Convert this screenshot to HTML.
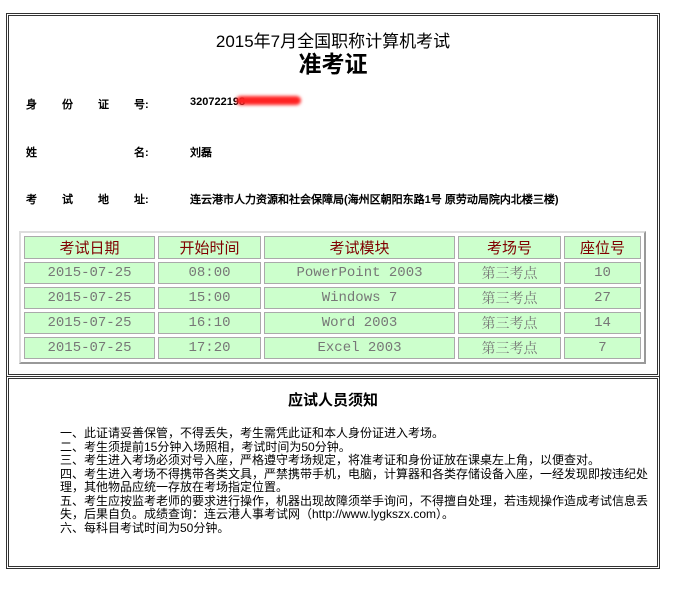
<html><head><style>
body{margin:0;background:#fff;font-family:"Liberation Serif","Noto Serif CJK SC",serif;}
.box{position:absolute;left:6px;width:648px;border:3px double #333;background:#fff}
.lab{position:absolute;font-size:11px;font-weight:bold;font-family:"Liberation Sans","WenQuanYi Zen Hei",sans-serif}
table{position:absolute;left:10px;top:215px;width:627px;border-collapse:separate;border-spacing:3px;border:2px solid #ddd;border-right-color:#999;border-bottom-color:#999}
td{background:#ccffcc;border:1px solid #aaa;text-align:center;height:22px;padding:0;font-size:14px;color:#777;font-family:"Liberation Mono","Noto Serif CJK SC",serif}
tr.h td{color:#800000;font-family:"Liberation Sans","Noto Sans CJK SC",sans-serif;font-size:15px}
.n{position:absolute;left:51px;top:48px;font-size:12px;line-height:13.5px;width:590px;font-family:"Liberation Sans","WenQuanYi Zen Hei",sans-serif}
</style></head><body>
<div class="box" style="top:13px;height:358px">
<div style="position:absolute;left:0;right:0;top:11px;text-align:center;font-size:17px;font-family:'Liberation Sans','Noto Sans CJK SC',sans-serif">2015年7月全国职称计算机考试</div>
<div style="position:absolute;left:0;right:0;top:29px;text-align:center;font-size:23px;font-weight:bold;font-family:'Liberation Sans','Noto Sans CJK SC',sans-serif">准考证</div>
<div class="lab" style="left:17px;top:80px">身</div><div class="lab" style="left:53px;top:80px">份</div><div class="lab" style="left:89px;top:80px">证</div><div class="lab" style="left:125px;top:80px">号:</div>
<div class="lab" style="left:181px;top:80px">320722198</div>
<div style="position:absolute;left:227px;top:80px;width:65px;height:9px;border-radius:5px;background:#f22;filter:blur(1.5px)"></div>
<div class="lab" style="left:17px;top:128px">姓</div><div class="lab" style="left:125px;top:128px">名:</div><div class="lab" style="left:181px;top:128px">刘磊</div>
<div class="lab" style="left:17px;top:175px">考</div><div class="lab" style="left:53px;top:175px">试</div><div class="lab" style="left:89px;top:175px">地</div><div class="lab" style="left:125px;top:175px">址:</div>
<div class="lab" style="left:181px;top:175px">连云港市人力资源和社会保障局(海州区朝阳东路1号 原劳动局院内北楼三楼)</div>
<table>
<tr class="h"><td style="width:129px">考试日期</td><td style="width:101px">开始时间</td><td style="width:189px">考试模块</td><td style="width:101px">考场号</td><td>座位号</td></tr>
<tr><td>2015-07-25</td><td>08:00</td><td>PowerPoint 2003</td><td>第三考点</td><td>10</td></tr>
<tr><td>2015-07-25</td><td>15:00</td><td>Windows 7</td><td>第三考点</td><td>27</td></tr>
<tr><td>2015-07-25</td><td>16:10</td><td>Word 2003</td><td>第三考点</td><td>14</td></tr>
<tr><td>2015-07-25</td><td>17:20</td><td>Excel 2003</td><td>第三考点</td><td>7</td></tr>
</table>
</div>
<div class="box" style="top:376px;height:187px">
<div style="position:absolute;left:0;right:0;top:10px;text-align:center;font-size:15px;font-weight:bold;font-family:'Liberation Sans','Noto Sans CJK SC',sans-serif">应试人员须知</div>
<div class="n">一、此证请妥善保管，不得丢失，考生需凭此证和本人身份证进入考场。<br>二、考生须提前15分钟入场照相，考试时间为50分钟。<br>三、考生进入考场必须对号入座，严格遵守考场规定，将准考证和身份证放在课桌左上角，以便查对。<br>四、考生进入考场不得携带各类文具，严禁携带手机，电脑，计算器和各类存储设备入座，一经发现即按违纪处理，其他物品应统一存放在考场指定位置。<br>五、考生应按监考老师的要求进行操作，机器出现故障须举手询问，不得擅自处理，若违规操作造成考试信息丢失，后果自负。成绩查询：连云港人事考试网（http://www.lygkszx.com）。<br>六、每科目考试时间为50分钟。</div>
</div>
</body></html>
